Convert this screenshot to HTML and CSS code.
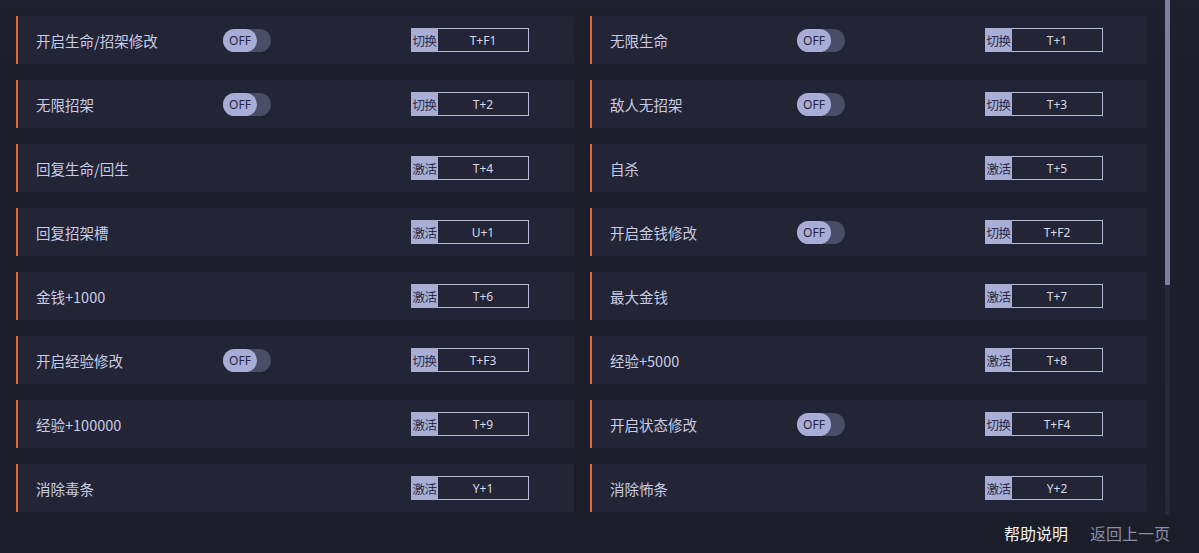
FILE: index.html
```html
<!DOCTYPE html>
<html lang="zh-CN">
<head>
<meta charset="utf-8">
<title>修改器</title>
<link rel="stylesheet" href="styles.css">
</head>
<body>
<div class="page">
  <div class="top">
    <div class="grid">
      <div class="row"><span class="label">开启生命/招架修改</span><span class="toggle"><span class="knob">OFF</span></span><span class="key"><span class="kind">切换</span><span class="val">T+F1</span></span></div>
      <div class="row"><span class="label">无限生命</span><span class="toggle"><span class="knob">OFF</span></span><span class="key"><span class="kind">切换</span><span class="val">T+1</span></span></div>
      <div class="row"><span class="label">无限招架</span><span class="toggle"><span class="knob">OFF</span></span><span class="key"><span class="kind">切换</span><span class="val">T+2</span></span></div>
      <div class="row"><span class="label">敌人无招架</span><span class="toggle"><span class="knob">OFF</span></span><span class="key"><span class="kind">切换</span><span class="val">T+3</span></span></div>
      <div class="row"><span class="label">回复生命/回生</span><span class="key"><span class="kind">激活</span><span class="val">T+4</span></span></div>
      <div class="row"><span class="label">自杀</span><span class="key"><span class="kind">激活</span><span class="val">T+5</span></span></div>
      <div class="row"><span class="label">回复招架槽</span><span class="key"><span class="kind">激活</span><span class="val">U+1</span></span></div>
      <div class="row"><span class="label">开启金钱修改</span><span class="toggle"><span class="knob">OFF</span></span><span class="key"><span class="kind">切换</span><span class="val">T+F2</span></span></div>
      <div class="row"><span class="label">金钱+1000</span><span class="key"><span class="kind">激活</span><span class="val">T+6</span></span></div>
      <div class="row"><span class="label">最大金钱</span><span class="key"><span class="kind">激活</span><span class="val">T+7</span></span></div>
      <div class="row"><span class="label">开启经验修改</span><span class="toggle"><span class="knob">OFF</span></span><span class="key"><span class="kind">切换</span><span class="val">T+F3</span></span></div>
      <div class="row"><span class="label">经验+5000</span><span class="key"><span class="kind">激活</span><span class="val">T+8</span></span></div>
      <div class="row"><span class="label">经验+100000</span><span class="key"><span class="kind">激活</span><span class="val">T+9</span></span></div>
      <div class="row"><span class="label">开启状态修改</span><span class="toggle"><span class="knob">OFF</span></span><span class="key"><span class="kind">切换</span><span class="val">T+F4</span></span></div>
      <div class="row"><span class="label">消除毒条</span><span class="key"><span class="kind">激活</span><span class="val">Y+1</span></span></div>
      <div class="row"><span class="label">消除怖条</span><span class="key"><span class="kind">激活</span><span class="val">Y+2</span></span></div>
    </div>
    <div class="scroll"><div class="thumb"></div></div>
  </div>
  <div class="footer">
    <span class="help">帮助说明</span>
    <span class="back">返回上一页</span>
  </div>
</div>
</body>
</html>
```

FILE: styles.css
```css
* { box-sizing: border-box; }
html, body { margin: 0; padding: 0; }
body {
  width: 1199px;
  height: 553px;
  overflow: hidden;
  background: linear-gradient(180deg, #1e202c 0px, #1c1e2b 60px, #1b1d29 553px);
  font-family: "Noto Sans CJK SC", "Microsoft YaHei", sans-serif;
  color: #c9cce3;
}
.page { display: flex; flex-direction: column; height: 553px; }
.top { display: flex; height: 517px; }
.grid {
  display: grid;
  grid-template-columns: 558px 557px;
  grid-auto-rows: 48px;
  column-gap: 16px;
  row-gap: 16px;
  padding: 16px 0 0 16px;
  align-content: start;
}
.row {
  display: flex;
  align-items: center;
  background: #232537;
  border-left: 2px solid #e0693a;
  padding-left: 18px;
  padding-right: 45px;
}
.row:nth-child(2n) { padding-right: 44px; }
.label {
  width: 187px;
  font-size: 14.5px;
  color: #c8cbe2;
  white-space: nowrap;
}
.toggle {
  width: 48px;
  height: 23px;
  border-radius: 12px;
  background: #4a4d66;
  display: flex;
}
.knob {
  width: 34px;
  height: 23px;
  border-radius: 12px;
  background: #a8add6;
  color: #24263a;
  font-size: 12px;
  display: flex;
  align-items: center;
  justify-content: center;
  font-family: "Noto Sans", "Liberation Sans", sans-serif;
}
.key {
  margin-left: auto;
  display: flex;
  height: 24px;
  width: 118px;
}
.kind {
  width: 27px;
  background: #a9aed6;
  color: #2a2c42;
  font-size: 12.5px;
  display: flex;
  align-items: center;
  justify-content: center;
  white-space: nowrap;
  letter-spacing: -0.5px;
}
.val {
  flex: 1;
  border: 1px solid #b5b9dc;
  border-left: none;
  font-size: 12px;
  color: #d6d8e8;
  display: flex;
  align-items: center;
  justify-content: center;
  font-family: "Noto Sans", "Liberation Sans", sans-serif;
}
.scroll {
  margin-left: 18px;
  width: 5px;
  height: 515px;
  background: #262838;
}
.thumb {
  height: 285px;
  background: #7b7fa2;
}
.footer {
  display: flex;
  justify-content: flex-end;
  align-items: center;
  gap: 22px;
  padding-right: 29px;
  height: 32px;
  font-size: 16px;
}
.help { color: #f2f2f7; }
.back { color: #8a8ea8; }
```
